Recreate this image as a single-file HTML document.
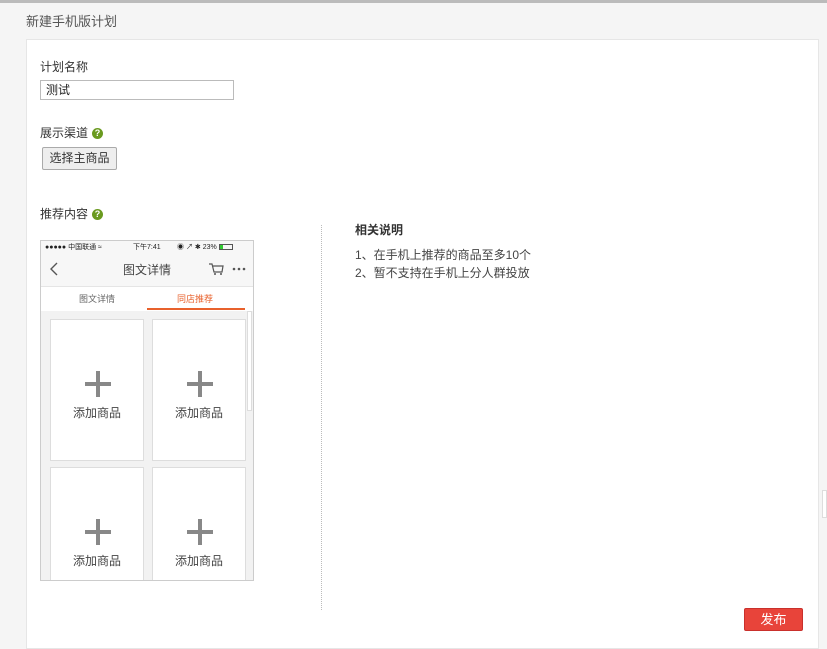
<!DOCTYPE html>
<html><head><meta charset="utf-8"><style>
*{margin:0;padding:0;box-sizing:border-box}
body{width:827px;height:644px;background:#f5f5f5;font-family:"Liberation Sans","Noto Sans CJK SC",sans-serif;font-size:12px;color:#333;position:relative;overflow:hidden}
.a{position:absolute}
.q{display:inline-block;width:11px;height:11px;border-radius:50%;background:#6a9a1f;color:#fff;font-size:9px;font-weight:bold;text-align:center;line-height:11px;vertical-align:1px;margin-left:4px}
.cell{position:absolute;background:#fff;border:1px solid #ddd;width:94px;height:142px;text-align:center;color:#444}
.plus{position:absolute;left:34px;width:26px;height:26px}
.plus:before{content:"";position:absolute;left:11px;top:0;width:4px;height:26px;background:#888}
.plus:after{content:"";position:absolute;top:11px;left:0;height:4px;width:26px;background:#888}
.cell span{position:absolute;left:0;right:0;top:84px;font-size:12px}
</style></head><body>
<div class="a" style="left:0;top:0;width:827px;height:3px;background:#bbb"></div>
<div class="a" style="left:26px;top:11px;font-size:13px;color:#555">新建手机版计划</div>
<div class="a" style="left:26px;top:39px;width:793px;height:610px;background:#fff;border:1px solid #e6e6e6"></div>
<div class="a" style="left:40px;top:58px">计划名称</div>
<div class="a" style="left:40px;top:80px;width:194px;height:20px;border:1px solid #bbb;padding:0 5px;line-height:18px;color:#222">测试</div>
<div class="a" style="left:40px;top:124px">展示渠道<span class="q">?</span></div>
<div class="a" style="left:42px;top:147px;width:75px;height:23px;border:1px solid #aaa;background:#eee;border-radius:2px;text-align:center;line-height:21px;font-size:12px">选择主商品</div>
<div class="a" style="left:40px;top:205px">推荐内容<span class="q">?</span></div>
<div class="a" style="left:40px;top:240px;width:214px;height:341px;border:1px solid #ccc;background:#f2f2f2;overflow:hidden">
 <div class="a" style="left:0;top:0;width:212px;height:70px;background:#f7f7f7"></div>
 <div class="a" style="left:4px;top:1px;font-size:7px;color:#222;white-space:nowrap">●●●●● 中国联通 ≈</div>
 <div class="a" style="left:92px;top:1px;font-size:7px;color:#222">下午7:41</div>
 <div class="a" style="left:136px;top:1px;font-size:7px;color:#222">◉ ↗ ✱ 23% <span style="display:inline-block;width:14px;height:6px;border:1px solid #555;vertical-align:-1px"><span style="display:block;width:3px;height:4px;background:#3c3"></span></span></div>
 <svg class="a" style="left:8px;top:21px" width="10" height="14"><path d="M8 1L2 7l6 6" fill="none" stroke="#555" stroke-width="1.4"/></svg>
 <div class="a" style="left:0;width:212px;top:20px;text-align:center;font-size:12px;color:#444">图文详情</div>
 <svg class="a" style="left:167px;top:21px" width="16" height="14"><path d="M1 2h3l2 8h8l1-6H5" fill="none" stroke="#555" stroke-width="1.2"/><circle cx="7" cy="12" r="1" fill="#555"/><circle cx="13" cy="12" r="1" fill="#555"/></svg>
 <svg class="a" style="left:191px;top:26px" width="14" height="4"><circle cx="2" cy="2" r="1.3" fill="#555"/><circle cx="7" cy="2" r="1.3" fill="#555"/><circle cx="12" cy="2" r="1.3" fill="#555"/></svg>
 <div class="a" style="left:0;top:45px;width:212px;height:25px;background:#fff;border-top:1px solid #e5e5e5"></div>
 <div class="a" style="left:38px;top:51px;font-size:9px;color:#666">图文详情</div>
 <div class="a" style="left:136px;top:51px;font-size:9px;color:#e8612c">同店推荐</div>
 <div class="a" style="left:106px;top:67px;width:98px;height:2px;background:#e8612c"></div>
 <div class="a" style="left:206px;top:70px;width:5px;height:100px;background:#fff;border:1px solid #ddd"></div>
 <div class="cell" style="left:9px;top:78px"><div class="plus" style="top:51px"></div><span>添加商品</span></div>
 <div class="cell" style="left:111px;top:78px"><div class="plus" style="top:51px"></div><span>添加商品</span></div>
 <div class="cell" style="left:9px;top:226px"><div class="plus" style="top:51px"></div><span>添加商品</span></div>
 <div class="cell" style="left:111px;top:226px"><div class="plus" style="top:51px"></div><span>添加商品</span></div>
</div>
<div class="a" style="left:321px;top:225px;height:385px;border-left:1px dotted #bbb"></div>
<div class="a" style="left:355px;top:221px;font-weight:bold;color:#333">相关说明</div>
<div class="a" style="left:355px;top:246px;line-height:18px;color:#444">1、在手机上推荐的商品至多10个<br>2、暂不支持在手机上分人群投放</div>
<div class="a" style="left:744px;top:608px;width:59px;height:23px;background:#e8443a;border:1px solid #c9302c;border-radius:2px;color:#fff;text-align:center;line-height:21px;font-size:13px">发布</div>
<div class="a" style="left:822px;top:490px;width:5px;height:28px;border:1px solid #ddd;background:#fff"></div>
</body></html>
